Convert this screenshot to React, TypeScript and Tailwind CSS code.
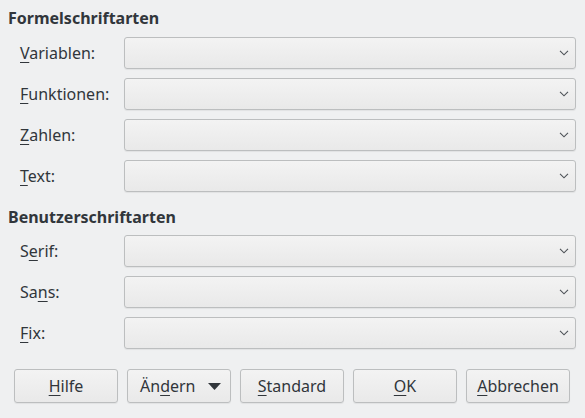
import React from 'react';

const Chevron = () => (
  <svg width="10" height="6" viewBox="0 0 10 6" className="shrink-0">
    <path d="M1 0.8 L5 4.8 L9 0.8" fill="none" stroke="#4d5257" strokeWidth="1.1" />
  </svg>
);

const Mn: React.FC<{ children: React.ReactNode }> = ({ children }) => (
  <span className="underline decoration-1 underline-offset-[3px]">{children}</span>
);

const ComboRow: React.FC<{ label: React.ReactNode }> = ({ label }) => (
  <div className="flex items-center h-8">
    <div className="w-[116px] pl-3 shrink-0">{label}</div>
    <div className="flex-1 h-8 rounded-[3px] border border-[#bcbebf] bg-gradient-to-b from-[#f3f3f3] to-[#e9e9e9] shadow-[0_1px_1px_rgba(0,0,0,0.06)] flex items-center justify-end pr-[6px]">
      <Chevron />
    </div>
  </div>
);

const Btn: React.FC<{ children: React.ReactNode; className?: string }> = ({ children, className }) => (
  <button className={`w-[104px] h-[34px] rounded-[3px] border border-[#bcbebf] bg-gradient-to-b from-[#f3f3f3] to-[#e9e9e9] shadow-[0_1px_1px_rgba(0,0,0,0.06)] flex items-center ${className || 'justify-center'}`}>
    {children}
  </button>
);

export default function App() {
  return (
    <div
      className="w-[585px] h-[418px] bg-[#eff0f1] text-[#31363b] text-[16px] leading-[22px] overflow-hidden"
      style={{ fontFamily: '"Noto Sans", "DejaVu Sans", sans-serif' }}
    >
      <div className="pl-2 pr-[9px] pt-[7px]">
        <h2 className="font-bold h-[22px] mb-2">Formelschriftarten</h2>
        <div className="flex flex-col gap-[9px]">
          <ComboRow label={<><Mn>V</Mn>ariablen:</>} />
          <ComboRow label={<><Mn>F</Mn>unktionen:</>} />
          <ComboRow label={<><Mn>Z</Mn>ahlen:</>} />
          <ComboRow label={<><Mn>T</Mn>ext:</>} />
        </div>
        <h2 className="font-bold h-[22px] mt-[14px] mb-[7px]">Benutzerschriftarten</h2>
        <div className="flex flex-col gap-[9px]">
          <ComboRow label={<>S<Mn>e</Mn>rif:</>} />
          <ComboRow label={<>Sa<Mn>n</Mn>s:</>} />
          <ComboRow label={<><Mn>F</Mn>ix:</>} />
        </div>
      </div>
      <div className="flex gap-[9px] pl-[14px] mt-5">
        <Btn><Mn>H</Mn>ilfe</Btn>
        <Btn className="justify-between pl-3 pr-[9px]">
          <span>Än<Mn>d</Mn>ern</span>
          <svg width="13" height="7" viewBox="0 0 13 7">
            <path d="M0 0 H13 L6.5 7 Z" fill="#31363b" />
          </svg>
        </Btn>
        <Btn><Mn>S</Mn>tandard</Btn>
        <Btn><Mn>O</Mn>K</Btn>
        <Btn><Mn>A</Mn>bbrechen</Btn>
      </div>
    </div>
  );
}
